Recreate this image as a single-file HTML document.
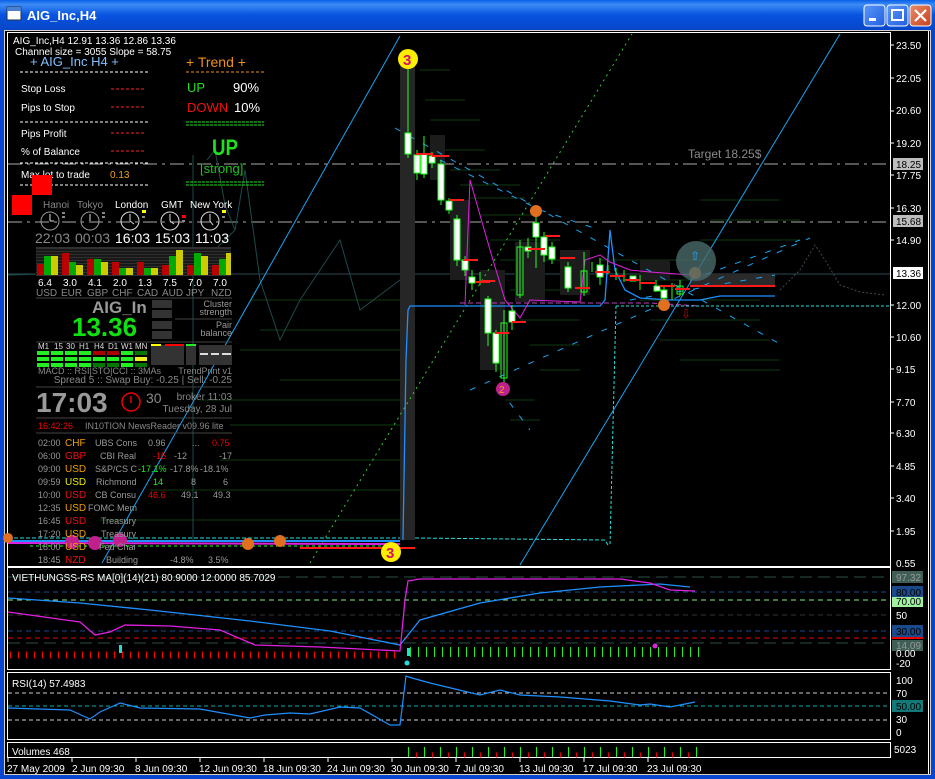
<!DOCTYPE html>
<html><head><meta charset="utf-8"><style>
html,body{margin:0;padding:0;width:935px;height:779px;overflow:hidden;background:#0831d9;}
svg{display:block}
text{font-family:"Liberation Sans",sans-serif;}
</style></head><body>
<svg width="935" height="779" viewBox="0 0 935 779" xmlns="http://www.w3.org/2000/svg">
<defs>
<linearGradient id="tb" x1="0" y1="0" x2="0" y2="1">
<stop offset="0" stop-color="#0a5fe8"/><stop offset="0.15" stop-color="#3d8cf5"/><stop offset="0.5" stop-color="#0753e0"/><stop offset="1" stop-color="#0846c8"/></linearGradient>
<linearGradient id="btn" x1="0" y1="0" x2="1" y2="1"><stop offset="0" stop-color="#5b96f7"/><stop offset="1" stop-color="#1f5fe0"/></linearGradient>
<linearGradient id="cls" x1="0" y1="0" x2="1" y2="1"><stop offset="0" stop-color="#e88c6a"/><stop offset="1" stop-color="#c8401c"/></linearGradient>
</defs>
<!-- window frame -->
<rect x="0" y="0" width="935" height="779" fill="#0846d0"/>
<rect x="0" y="0" width="935" height="30" fill="url(#tb)"/>
<rect x="4" y="30" width="927" height="745" fill="#d4d0c8"/>
<rect x="5" y="31" width="925" height="743" fill="#000"/>
<!-- title -->
<rect x="7" y="7" width="14" height="13" fill="#fff" stroke="#234" stroke-width="1"/>
<rect x="7" y="7" width="14" height="4" fill="#4a7ed0"/>
<text x="27" y="20" fill="#fff" font-size="13" font-weight="bold">AIG_Inc,H4</text>
<rect x="864" y="5" width="21" height="21" rx="3" fill="url(#btn)" stroke="#fff"/>
<rect x="869" y="18" width="7" height="3" fill="#fff"/>
<rect x="887" y="5" width="21" height="21" rx="3" fill="url(#btn)" stroke="#fff"/>
<rect x="892" y="10" width="11" height="10" fill="none" stroke="#fff" stroke-width="2"/>
<rect x="910" y="5" width="21" height="21" rx="3" fill="url(#cls)" stroke="#fff"/>
<path d="M915 10 L926 21 M926 10 L915 21" stroke="#fff" stroke-width="2.2"/>

<!-- panes borders -->
<g fill="none" stroke="#fff" stroke-width="1">
<rect x="7.5" y="32.5" width="883" height="534"/>
<rect x="7.5" y="567.5" width="883" height="102"/>
<rect x="7.5" y="672.5" width="883" height="67"/>
<rect x="7.5" y="742.5" width="883" height="15"/>
</g>
<line x1="928.5" y1="31" x2="928.5" y2="774" stroke="#fff"/>

<!-- price axis -->
<g fill="#fff" font-size="10">
<text x="896" y="49">23.50</text><text x="896" y="82">22.05</text><text x="896" y="114">20.60</text>
<text x="896" y="147">19.20</text><text x="896" y="179">17.75</text><text x="896" y="212">16.30</text>
<text x="896" y="244">14.90</text><text x="896" y="309">12.00</text><text x="896" y="341">10.60</text>
<text x="896" y="373">9.15</text><text x="896" y="406">7.70</text><text x="896" y="437">6.30</text>
<text x="896" y="470">4.85</text><text x="896" y="502">3.40</text><text x="896" y="535">1.95</text><text x="896" y="567">0.55</text>
</g>
<g stroke="#fff"><path d="M891 45h3M891 78h3M891 111h3M891 143h3M891 175h3M891 208h3M891 240h3M891 305h3M891 337h3M891 369h3M891 402h3M891 433h3M891 466h3M891 498h3M891 531h3"/></g>
<rect x="893" y="158" width="30" height="12" fill="#bdbdbd"/><text x="896" y="168" font-size="10" fill="#000">18.25</text>
<rect x="893" y="215" width="30" height="12" fill="#bdbdbd"/><text x="896" y="225" font-size="10" fill="#000">15.68</text>
<rect x="893" y="267" width="30" height="12" fill="#fff"/><text x="896" y="277" font-size="10" fill="#000">13.36</text>

<!-- level lines -->
<line x1="8" y1="164" x2="890" y2="164" stroke="#aaa" stroke-dasharray="14 5 3 5"/>
<line x1="8" y1="222" x2="890" y2="222" stroke="#aaa" stroke-dasharray="14 5 3 5"/>
<line x1="8" y1="274" x2="890" y2="274" stroke="#2e4a55"/>
<text x="688" y="158" font-size="12" fill="#8a8a8a">Target 18.25$</text>

<!-- faint green profile lines -->
<g stroke="#0f3a10" stroke-width="1">
<path d="M420 70h30M425 100h40M430 120h50M440 150h45M450 170h50M460 185h60M470 198h55M480 215h60M490 240h70M500 260h80M510 290h70M520 320h60M530 345h50M540 370h40M505 400h30M510 420h30M600 260h110M620 280h100M640 300h120M650 320h110M660 340h110M680 360h100M700 200h80M710 220h90M700 240h100M720 370h60M250 300h150M260 330h140M240 350h160M200 400h200M220 460h180M150 490h250M100 520h300M280 380h120M230 425h170"/>
</g>
<!-- cluster line dark teal -->
<path d="M8 275 L120 272 L170 250 L200 265 L235 230 L245 170 L260 280 L280 340 L300 300 L340 240 L360 310 L400 280 L410 270" fill="none" stroke="#1e4a4a" stroke-width="1"/>
<path d="M207 160 L215 150 L225 205 L235 230" fill="none" stroke="#1e4a4a"/>
<path d="M193 155 L193 540" stroke="#1e4a4a"/>

<!-- big dark bar -->
<rect x="400" y="55" width="15" height="485" fill="#262626"/>
<rect x="430" y="135" width="15" height="45" fill="#1c1c1c"/>
<rect x="450" y="200" width="20" height="80" fill="#1c1c1c"/>
<rect x="480" y="270" width="25" height="100" fill="#1c1c1c"/>
<rect x="515" y="242" width="30" height="60" fill="#1c1c1c"/>
<rect x="560" y="250" width="30" height="45" fill="#1c1c1c"/>
<rect x="640" y="260" width="30" height="20" fill="#1c1c1c"/>
<rect x="690" y="274" width="85" height="12" fill="#2a2a2a"/>

<!-- diagonal lines -->
<line x1="102" y1="563" x2="400" y2="36" stroke="#1aa4f0" stroke-width="1"/>
<line x1="520" y1="565" x2="840" y2="34" stroke="#1aa4f0" stroke-width="1"/>
<line x1="310" y1="563" x2="632" y2="34" stroke="#33cc33" stroke-dasharray="2 4"/>
<g stroke="#1aa4f0" stroke-dasharray="6 10" fill="none">
<path d="M395 128 L780 344"/>
<path d="M470 390 L810 238"/>
<path d="M440 160 L540 210 L600 230"/>
<path d="M630 300 L775 275"/>
<path d="M690 280 L800 240"/>
<path d="M500 390 L530 430"/>
</g>
<!-- blue step line -->
<path d="M403 540 L404 480 L406 360 L408 310 L410 306 L600 306 L605 300 L610 230 L615 270 L625 290 L640 298 L670 300 L700 300 L720 296 L775 296" fill="none" stroke="#1e90ff" stroke-width="1.3"/>
<!-- magenta line -->
<path d="M465 305 L470 180 L490 250 L505 300 L520 318 L530 300 L580 302 L585 260 L600 255 L610 262 L630 270 L650 272 L690 275" fill="none" stroke="#e020e0" stroke-width="1"/>
<path d="M460 303 L650 303 L700 306" fill="none" stroke="#c040c0" stroke-dasharray="5 3"/>
<line x1="616" y1="306" x2="890" y2="306" stroke="#20e0e0" stroke-dasharray="3 2"/>
<line x1="616" y1="306" x2="610" y2="545" stroke="#20e0e0" stroke-dasharray="3 2"/>
<!-- distribution dashed right -->
<path d="M780 290 L800 270 L815 245 L825 260 L840 285 L860 292 L885 295" fill="none" stroke="#445" stroke-dasharray="2 2"/>

<!-- candles -->
<g stroke="#2f2" stroke-width="1">
<path d="M408 60V158M417 150V180M424 136V178M432 152V168M441 160V205M449 198V214M457 215V266M465 256V276M472 270V290M480 272V285M488 296V346M496 330V372M504 310V385M512 305V330M520 240V298M528 238V258M536 212V268M544 232V262M552 242V264M568 262V292M584 252V296M592 262V272M600 258V285M608 265V274M616 268V280M624 270V282M640 275V290M656 280V292M664 285V305M672 283V300M680 280V296"/>
</g>
<g fill="#fff" stroke="#2f2" stroke-width="1">
<rect x="405" y="133" width="6" height="21"/><rect x="414" y="155" width="6" height="18"/>
<rect x="421" y="154" width="6" height="20"/><rect x="429" y="156" width="6" height="7"/>
<rect x="438" y="164" width="6" height="36"/><rect x="446" y="201" width="6" height="9"/>
<rect x="454" y="219" width="6" height="41"/><rect x="462" y="260" width="6" height="10"/>
<rect x="469" y="277" width="6" height="6"/><rect x="485" y="299" width="6" height="34"/>
<rect x="493" y="333" width="6" height="30"/><rect x="501" y="323" width="6" height="55" fill="none"/>
<rect x="509" y="311" width="6" height="11"/><rect x="517" y="247" width="6" height="48" fill="none"/>
<rect x="525" y="247" width="6" height="4"/><rect x="533" y="223" width="6" height="14"/>
<rect x="541" y="237" width="6" height="18"/><rect x="549" y="247" width="6" height="12"/>
<rect x="565" y="267" width="6" height="21"/><rect x="581" y="271" width="6" height="21" fill="none"/>
<rect x="597" y="265" width="6" height="12"/><rect x="630" y="276" width="6" height="5"/>
<rect x="654" y="286" width="6" height="5"/><rect x="661" y="290" width="6" height="8"/>
<rect x="677" y="286" width="6" height="8" fill="none"/>
</g>
<g stroke="#ff1a1a" stroke-width="2">
<path d="M416 154h17M432 156h17M449 200h15M463 260h15M475 282h15M481 281h14M495 333h14M512 322h14M528 249h17M545 236h15M560 258h15M575 288h15M595 272h15M610 276h15M625 280h15M640 283h15M660 286h15M675 289h15M690 286h85M300 548h115"/>
</g>
<!-- bottom flat lines -->
<path d="M8 538 L400 538" stroke="#20e0e0" stroke-dasharray="4 2"/>
<path d="M8 541 L400 541" stroke="#1e90ff" stroke-width="2"/>
<path d="M8 543 L400 544" stroke="#e020e0" stroke-width="2"/>
<path d="M415 538 L605 540 L608 545" stroke="#20e0e0" stroke-dasharray="4 2" fill="none"/>
<path d="M30 546 L400 546" stroke="#2f2" stroke-dasharray="3 3"/>
<!-- markers -->
<circle cx="408" cy="59" r="10" fill="#ffee00"/><text x="403" y="65" font-size="15" font-weight="bold" fill="#d01070">3</text>
<circle cx="391" cy="552" r="10" fill="#ffee00"/><text x="386" y="558" font-size="15" font-weight="bold" fill="#d01070">3</text>
<circle cx="503" cy="389" r="7" fill="#c0208c"/><text x="499" y="393" font-size="10" fill="#e8a020">2</text>
<circle cx="95" cy="543" r="7" fill="#c0208c"/><circle cx="72" cy="542" r="7" fill="#c0208c"/><circle cx="120" cy="540" r="7" fill="#c0208c"/>
<circle cx="536" cy="211" r="6" fill="#e07020"/><circle cx="664" cy="305" r="6" fill="#e07020"/><circle cx="695" cy="273" r="6" fill="#e07020"/>
<circle cx="248" cy="544" r="6" fill="#e07020"/><circle cx="280" cy="541" r="6" fill="#e07020"/><circle cx="8" cy="538" r="5" fill="#e07020"/>
<circle cx="696" cy="261" r="20" fill="#4a6a6a" opacity="0.8"/>
<text x="690" y="260" font-size="12" fill="#2af" >⇧</text>
<text x="681" y="318" font-size="12" fill="#c01010">⇩</text>

<!-- ===== LEFT PANEL ===== -->
<g font-size="10" fill="#fff">
<text x="13" y="44">AIG_Inc,H4  12.91 13.36 12.86 13.36</text>
<text x="15" y="55">Channel size = 3055 Slope = 58.75</text>
</g>
<text x="30" y="66" font-size="13" fill="#7ec0ff">+  AIG_Inc  H4  +</text>
<g stroke="#fff" stroke-dasharray="3 2"><path d="M20 72h128M20 122h128M20 163h128M20 185h128"/></g>
<g font-size="10" fill="#fff">
<text x="21" y="92">Stop Loss</text><text x="21" y="111">Pips to Stop</text>
<text x="21" y="137">Pips Profit</text><text x="21" y="155">% of Balance</text>
<text x="21" y="178">Max lot to trade</text>
</g>
<text x="110" y="178" font-size="10" fill="#f0a020">0.13</text>
<g stroke="#f22" stroke-dasharray="3 2"><path d="M111 89h34M111 107h34M111 133h34M111 151h34"/></g>
<rect x="32" y="175" width="20" height="20" fill="#f00"/><rect x="12" y="195" width="20" height="20" fill="#f00"/>
<text x="186" y="67" font-size="14" fill="#f0901a">+  Trend  +</text>
<line x1="186" y1="72" x2="264" y2="72" stroke="#f0901a" stroke-dasharray="3 2"/>
<text x="187" y="92" font-size="13" fill="#20e020">UP</text><text x="233" y="92" font-size="13" fill="#fff">90%</text>
<text x="187" y="112" font-size="13" fill="#f01010">DOWN</text><text x="234" y="112" font-size="13" fill="#fff">10%</text>
<g stroke="#20e020" stroke-dasharray="3 1"><path d="M186 122h78M186 125h78M186 182h78M186 185h78"/></g>
<text x="212" y="155" font-size="22" font-weight="bold" fill="#20e020" textLength="26" lengthAdjust="spacingAndGlyphs">UP</text>
<text x="200" y="173" font-size="13" fill="#20c020">[strong]</text>
<!-- clocks -->
<g font-size="10"><text x="43" y="208" fill="#888">Hanoi</text><text x="77" y="208" fill="#888">Tokyo</text>
<text x="115" y="208" fill="#fff">London</text><text x="161" y="208" fill="#fff">GMT</text><text x="190" y="208" fill="#fff">New York</text></g>
<g fill="none" stroke="#999"><circle cx="50" cy="221" r="9"/><circle cx="90" cy="221" r="9"/></g>
<g fill="none" stroke="#ddd"><circle cx="130" cy="221" r="9"/><circle cx="170" cy="221" r="9"/><circle cx="210" cy="221" r="9"/></g>
<g stroke="#ddd"><path d="M50 221v-7M50 221h4M90 221v-7M130 221v-7M130 221l4 3M170 221v-7M170 221l4 3M210 221v-7M210 221l3 4"/></g>
<g fill="#888"><rect x="62" y="212" width="3" height="2"/><rect x="62" y="216" width="3" height="2"/><rect x="102" y="212" width="3" height="2"/><rect x="102" y="216" width="3" height="2"/><rect x="142" y="216" width="3" height="2"/><rect x="182" y="220" width="3" height="2"/><rect x="222" y="216" width="3" height="2"/></g>
<rect x="142" y="210" width="4" height="3" fill="#ff0"/><rect x="182" y="215" width="4" height="3" fill="#f00"/><rect x="222" y="210" width="4" height="3" fill="#ff0"/>
<g font-size="14"><text x="35" y="243" fill="#888">22:03</text><text x="75" y="243" fill="#888">00:03</text>
<text x="115" y="243" fill="#fff">16:03</text><text x="155" y="243" fill="#fff">15:03</text><text x="195" y="243" fill="#fff">11:03</text></g>
<!-- strength bars -->
<g>
<rect x="36" y="247" width="195" height="29" fill="#303030"/>
<g stroke="#000" stroke-width="1"><path d="M36 250h195M36 253h195M36 256h195M36 259h195M36 262h195M36 265h195M36 268h195M36 271h195M36 274h195"/></g>
<g fill="#b00"><rect x="37" y="264" width="7" height="11"/><rect x="62" y="253" width="7" height="22"/><rect x="87" y="259" width="7" height="16"/><rect x="112" y="262" width="7" height="13"/><rect x="137" y="262" width="7" height="13"/><rect x="162" y="265" width="7" height="10"/><rect x="187" y="265" width="7" height="10"/><rect x="212" y="265" width="7" height="10"/></g>
<g fill="#0a0"><rect x="44" y="256" width="7" height="19"/><rect x="69" y="262" width="7" height="13"/><rect x="94" y="259" width="7" height="16"/><rect x="119" y="268" width="7" height="7"/><rect x="144" y="268" width="7" height="7"/><rect x="169" y="256" width="7" height="19"/><rect x="194" y="253" width="7" height="22"/><rect x="219" y="259" width="7" height="16"/></g>
<g fill="#cc0"><rect x="51" y="256" width="7" height="19"/><rect x="76" y="265" width="7" height="10"/><rect x="101" y="262" width="7" height="13"/><rect x="126" y="268" width="7" height="7"/><rect x="151" y="268" width="7" height="7"/><rect x="176" y="250" width="7" height="25"/><rect x="201" y="256" width="7" height="19"/><rect x="226" y="253" width="5" height="22"/></g>
</g>
<g font-size="10" fill="#fff"><text x="38" y="286">6.4</text><text x="63" y="286">3.0</text><text x="88" y="286">4.1</text><text x="113" y="286">2.0</text><text x="138" y="286">1.3</text><text x="163" y="286">7.5</text><text x="188" y="286">7.0</text><text x="213" y="286">7.0</text></g>
<g font-size="10" fill="#888"><text x="36" y="296">USD</text><text x="61" y="296">EUR</text><text x="87" y="296">GBP</text><text x="112" y="296">CHF</text><text x="137" y="296">CAD</text><text x="162" y="296">AUD</text><text x="186" y="296">JPY</text><text x="211" y="296">NZD</text></g>
<line x1="36" y1="298" x2="232" y2="298" stroke="#444"/>
<text x="92" y="313" font-size="17" font-weight="bold" fill="#999">AIG_In</text>
<text x="72" y="336" font-size="26" font-weight="bold" fill="#10e010">13.36</text>
<g fill="#333"><rect x="152" y="300" width="20" height="8"/><rect x="152" y="310" width="20" height="8"/><rect x="152" y="321" width="20" height="8"/><rect x="152" y="331" width="20" height="8"/></g>
<g font-size="9" fill="#999" text-anchor="end"><text x="232" y="307">Cluster</text><text x="232" y="315">strength</text><text x="232" y="328">Pair</text><text x="232" y="336">balance</text></g>
<line x1="175" y1="319" x2="232" y2="319" stroke="#444"/>
<line x1="36" y1="342" x2="232" y2="342" stroke="#444"/>
<g font-size="8" fill="#ddd"><text x="38" y="349">M1</text><text x="54" y="349">15</text><text x="66" y="349">30</text><text x="79" y="349">H1</text><text x="94" y="349">H4</text><text x="108" y="349">D1</text><text x="121" y="349">W1</text><text x="135" y="349">MN</text></g>
<g fill="#2e2"><rect x="37" y="351" width="12" height="4"/><rect x="51" y="351" width="12" height="4"/><rect x="65" y="351" width="12" height="4"/><rect x="79" y="351" width="12" height="4"/><rect x="121" y="351" width="12" height="4"/>
<rect x="37" y="357" width="12" height="4"/><rect x="51" y="357" width="12" height="4"/><rect x="65" y="357" width="12" height="4"/><rect x="79" y="357" width="12" height="4"/><rect x="121" y="357" width="12" height="4"/>
<rect x="37" y="363" width="12" height="4"/><rect x="51" y="363" width="12" height="4"/><rect x="65" y="363" width="12" height="4"/><rect x="79" y="363" width="12" height="4"/><rect x="121" y="363" width="12" height="4"/></g>
<g fill="#a00"><rect x="93" y="351" width="12" height="4"/><rect x="107" y="351" width="12" height="4"/></g>
<g fill="#2e2"><rect x="93" y="357" width="12" height="4"/><rect x="107" y="357" width="12" height="4"/></g>
<g fill="#070"><rect x="93" y="363" width="12" height="4"/><rect x="107" y="363" width="12" height="4"/><rect x="135" y="351" width="12" height="4"/><rect x="135" y="363" width="12" height="4"/></g>
<rect x="135" y="357" width="12" height="4" fill="#ee2"/>
<g fill="#333"><rect x="151" y="345" width="33" height="20"/><rect x="186" y="345" width="10" height="20"/><rect x="199" y="345" width="33" height="20"/></g>
<rect x="151" y="344" width="10" height="2" fill="#ff0"/><rect x="165" y="344" width="19" height="2" fill="#f00"/><rect x="186" y="344" width="10" height="2" fill="#2e2"/>
<g fill="#ddd"><rect x="200" y="353" width="8" height="2"/><rect x="211" y="353" width="8" height="2"/><rect x="222" y="353" width="9" height="2"/></g>
<g font-size="9" fill="#888"><text x="38" y="374">MACD :: RSI|STO|CCI :: 3MAs</text><text x="232" y="374" text-anchor="end">TrendPrint v1</text>
<text x="232" y="383" text-anchor="end" font-size="10">Spread 5 :: Swap Buy: -0.25 | Sell: -0.25</text></g>
<line x1="36" y1="387" x2="232" y2="387" stroke="#444"/>
<text x="36" y="412" font-size="28" font-weight="bold" fill="#999">17:03</text>
<circle cx="131" cy="402" r="9" fill="none" stroke="#e00" stroke-width="1.5"/><path d="M131 396v7" stroke="#e00" stroke-width="1.5"/>
<text x="146" y="403" font-size="14" fill="#888">30</text>
<g font-size="10" fill="#888" text-anchor="end"><text x="232" y="400">broker   11:03</text><text x="232" y="412">Tuesday, 28 Jul</text></g>
<line x1="36" y1="418" x2="232" y2="418" stroke="#444"/>
<text x="38" y="429" font-size="9" fill="#e00">16:42:26</text>
<text x="85" y="429" font-size="9" fill="#888">IN10TION NewsReader v09.96 lite</text>
<line x1="36" y1="433" x2="232" y2="433" stroke="#444"/>
<g font-size="9" fill="#999">
<text x="38" y="446">02:00</text><text x="38" y="459">06:00</text><text x="38" y="472">09:00</text><text x="38" y="485">09:59</text><text x="38" y="498">10:00</text><text x="38" y="511">12:35</text><text x="38" y="524">16:45</text><text x="38" y="537">17:20</text><text x="38" y="550">18:00</text><text x="38" y="563">18:45</text>
<text x="95" y="446">UBS Cons</text><text x="100" y="459">CBI Real</text><text x="95" y="472">S&amp;P/CS C</text><text x="96" y="485">Richmond</text><text x="95" y="498">CB Consu</text><text x="88" y="511">FOMC Mem</text><text x="101" y="524">Treasury</text><text x="101" y="537">Treasury</text><text x="99" y="550">Fed Chai</text><text x="106" y="563">Building</text>
<text x="148" y="446">0.96</text><text x="192" y="446">...</text><text x="174" y="459">-12</text><text x="170" y="472">-17.8%</text><text x="191" y="485">8</text><text x="181" y="498">49.1</text><text x="170" y="563">-4.8%</text><text x="208" y="563">3.5%</text>
<text x="219" y="459">-17</text><text x="200" y="472">-18.1%</text><text x="223" y="485">6</text><text x="213" y="498">49.3</text>
</g>
<g font-size="9" fill="#e00"><text x="212" y="446">0.75</text><text x="153" y="459">-15</text><text x="148" y="498">46.6</text></g>
<g font-size="9" fill="#2e2"><text x="138" y="472">-17.1%</text><text x="153" y="485">14</text></g>
<g font-size="10"><text x="65" y="446" fill="#f0a000">CHF</text><text x="65" y="459" fill="#f01010">GBP</text><text x="65" y="472" fill="#f0a000">USD</text><text x="65" y="485" fill="#ee0">USD</text><text x="65" y="498" fill="#f01010">USD</text><text x="65" y="511" fill="#f0a000">USD</text><text x="65" y="524" fill="#f01010">USD</text><text x="65" y="537" fill="#f0a000">USD</text><text x="65" y="550" fill="#f0a000">USD</text><text x="65" y="563" fill="#f01010">NZD</text></g>

<!-- ===== SUBWINDOW 1 ===== -->
<g stroke-dasharray="5 4">
<line x1="8" y1="577" x2="890" y2="577" stroke="#2e4e46" stroke-dasharray="12 6"/>
<line x1="8" y1="592" x2="890" y2="592" stroke="#1a4a8a"/>
<line x1="8" y1="600" x2="890" y2="600" stroke="#80f080"/>
<line x1="8" y1="615" x2="890" y2="615" stroke="#333"/>
<line x1="8" y1="631" x2="890" y2="631" stroke="#1a4a8a"/>
<line x1="8" y1="638" x2="890" y2="638" stroke="#e00"/>
<line x1="8" y1="643" x2="890" y2="643" stroke="#2e4e46" stroke-dasharray="12 6"/>
</g>
<text x="12" y="581" font-size="10" fill="#fff">VIETHUNGSS-RS MA[0](14)(21) 80.9000 12.0000 85.7029</text>
<path d="M8 598 L80 603 L150 610 L250 621 L330 631 L400 645 L404 640 L420 620 L480 603 L540 593 L600 587 L660 584 L690 587" fill="none" stroke="#1e90ff" stroke-width="1.3"/>
<path d="M8 612 L80 622 L95 635 L110 632 L125 625 L170 626 L220 630 L255 645 L320 647 L400 651 L405 600 L408 581 L420 579 L620 579 L650 583 L670 590 L695 591" fill="none" stroke="#e020e0" stroke-width="1.3"/>
<line x1="10" y1="655" x2="400" y2="655" stroke="#f00" stroke-width="7" stroke-dasharray="1 7"/>
<line x1="410" y1="652" x2="700" y2="652" stroke="#2e2" stroke-width="10" stroke-dasharray="1 7"/>
<rect x="119" y="645" width="3" height="8" fill="#2dd"/><rect x="407" y="648" width="3" height="8" fill="#2dd"/><circle cx="407" cy="663" r="2.5" fill="#2dd"/>
<circle cx="655" cy="646" r="2.5" fill="#e020e0"/>
<g font-size="10">
<rect x="892" y="571" width="31" height="12" fill="#3e5e56"/><text x="896" y="581" fill="#999">97.32</text>
<rect x="892" y="586" width="31" height="12" fill="#1a4a8a"/><text x="896" y="596" fill="#000">80.00</text>
<rect x="892" y="597" width="31" height="10" fill="#a0f0a0"/><text x="896" y="605" fill="#000">70.00</text>
<text x="896" y="619" fill="#fff">50</text>
<rect x="892" y="625" width="31" height="12" fill="#1a4a8a"/><text x="896" y="635" fill="#000">30.00</text>
<rect x="892" y="637" width="31" height="2" fill="#e00"/>
<rect x="892" y="640" width="31" height="11" fill="#3e5e56"/><text x="896" y="649" fill="#999">14.09</text>
<text x="896" y="657" fill="#fff">0.00</text><text x="896" y="667" fill="#fff">-20</text>
</g>

<!-- ===== RSI ===== -->
<line x1="8" y1="693" x2="890" y2="693" stroke="#ccc" stroke-dasharray="4 3"/>
<line x1="8" y1="706" x2="890" y2="706" stroke="#1aa" stroke-dasharray="4 3"/>
<line x1="8" y1="720" x2="890" y2="720" stroke="#ccc" stroke-dasharray="4 3"/>
<text x="12" y="687" font-size="10" fill="#fff">RSI(14) 57.4983</text>
<path d="M8 708 L70 710 L90 719 L100 712 L120 703 L140 708 L200 709 L250 718 L265 715 L290 713 L310 714 L340 707 L360 708 L390 725 L400 725 L406 676 L412 678 L430 683 L480 695 L500 690 L520 695 L560 697 L610 701 L640 705 L650 704 L670 707 L695 702" fill="none" stroke="#1e90ff" stroke-width="1.2"/>
<g font-size="10" fill="#fff"><text x="896" y="684">100</text><text x="896" y="697">70</text><text x="896" y="723">30</text><text x="896" y="736">0</text></g>
<rect x="892" y="700" width="31" height="12" fill="#127878"/><text x="896" y="710" font-size="10" fill="#000">50.00</text>

<!-- ===== Volumes ===== -->
<text x="12" y="755" font-size="10" fill="#fff">Volumes 468</text>
<text x="894" y="753" font-size="10" fill="#fff">5023</text>
<line x1="408" y1="752" x2="700" y2="752" stroke="#2e2" stroke-width="10" stroke-dasharray="1 15"/>
<line x1="416" y1="755" x2="700" y2="755" stroke="#e00" stroke-width="5" stroke-dasharray="1 15"/>

<!-- time axis -->
<g stroke="#fff"><path d="M8 758v4M72 758v4M136 758v4M200 758v4M264 758v4M328 758v4M392 758v4M456 758v4M520 758v4M584 758v4M648 758v4"/></g>
<g font-size="10" fill="#fff">
<text x="7" y="772">27 May 2009</text><text x="72" y="772">2 Jun 09:30</text><text x="135" y="772">8 Jun 09:30</text><text x="199" y="772">12 Jun 09:30</text><text x="263" y="772">18 Jun 09:30</text><text x="327" y="772">24 Jun 09:30</text><text x="391" y="772">30 Jun 09:30</text><text x="455" y="772">7 Jul 09:30</text><text x="519" y="772">13 Jul 09:30</text><text x="583" y="772">17 Jul 09:30</text><text x="647" y="772">23 Jul 09:30</text>
</g>
</svg>
</body></html>
